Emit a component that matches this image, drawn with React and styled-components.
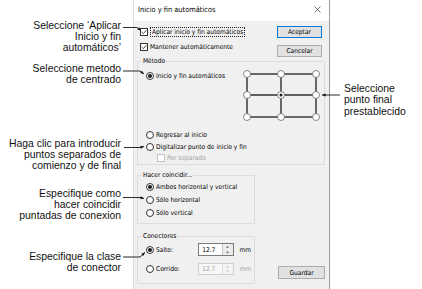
import React from 'react';
import styled, { createGlobalStyle } from 'styled-components';

const GlobalStyle = createGlobalStyle`
  html, body {
    margin: 0;
    padding: 0;
    background: #fff;
  }
  body {
    font-family: "Liberation Sans", Arial, sans-serif;
  }
`;

const Canvas = styled.div`
  position: relative;
  width: 422px;
  height: 289px;
  overflow: hidden;
  background: #fff;
  display: flex;
`;

const Gutter = styled.div`
  flex: none;
  width: ${(p) => p.$w}px;
`;

const Dialog = styled.div`
  flex: none;
  width: 197px;
  height: 300px;
  box-sizing: border-box;
  display: flex;
  flex-direction: column;
  border-left: 1px solid #dcdcdc;
  border-right: 1px solid #9c9c9c;
  font-family: "DejaVu Sans Condensed", "Liberation Sans", Tahoma, sans-serif;
  font-size: 6.6px;
  color: #000;
`;

const TitleBar = styled.div`
  height: 21px;
  flex: none;
  box-sizing: border-box;
  background: #fff;
  display: flex;
  align-items: center;
  justify-content: space-between;
  padding: 0 8px 2px 4px;
  font-size: 7.4px;
`;

const Body = styled.div`
  flex: 1;
  background: #f0f0f0;
  padding: 5px 4px 0 3px;
  display: flex;
  flex-direction: column;
`;

const TopRow = styled.div`
  display: flex;
  justify-content: space-between;
  height: 31px;
`;

const Column = styled.div`
  display: flex;
  flex-direction: column;
  gap: ${(p) => p.$gap}px;
  padding: 0 ${(p) => p.$right || 0}px 0 ${(p) => p.$left || 0}px;
`;

const Row = styled.div`
  display: flex;
  align-items: center;
  gap: 2px;
  height: ${(p) => p.$h || 13}px;
  padding-left: ${(p) => p.$indent || 0}px;
  color: ${(p) => (p.$disabled ? '#a3a3a3' : '#000')};
  white-space: nowrap;
`;

const Box = styled.span`
  flex: none;
  width: 8px;
  height: 8px;
  box-sizing: border-box;
  border: 1px solid ${(p) => (p.$disabled ? '#c4c4c4' : '#333')};
  background: #fff;
  display: flex;
  align-items: center;
  justify-content: center;
`;

const Radio = styled(Box)`
  border-radius: 50%;
`;

const Dot = styled.span`
  width: 4px;
  height: 4px;
  border-radius: 50%;
  background: #1a1a1a;
`;

const Focus = styled.span`
  border: 1px dotted #222;
  padding: 0 1px;
  line-height: 8px;
`;

const DialogButton = styled.div`
  width: ${(p) => p.$w || 45}px;
  height: ${(p) => p.$h || 12}px;
  box-sizing: border-box;
  border: 1px solid ${(p) => (p.$default ? '#0078d7' : '#adadad')};
  background: #e1e1e1;
  display: flex;
  align-items: center;
  justify-content: center;
`;

const Group = styled.fieldset`
  margin: 0;
  padding: 0;
  min-width: 0;
  box-sizing: border-box;
  width: ${(p) => (p.$w ? `${p.$w}px` : 'auto')};
  border: 1px solid #dcdcdc;
`;

const Legend = styled.legend`
  margin-left: 4px;
  padding: 0 1px;
  line-height: 8px;
`;

const GroupBody = styled.div`
  display: flex;
  flex-direction: column;
  gap: ${(p) => p.$gap || 0}px;
  padding: ${(p) => p.$pad};
`;

const MethodTop = styled.div`
  display: flex;
  justify-content: space-between;
  align-items: flex-start;
  margin-bottom: 7px;
`;

const BottomRow = styled.div`
  display: flex;
  justify-content: space-between;
  align-items: flex-end;
  margin-top: 6px;
`;

const FieldLabel = styled.span`
  width: 39px;
`;

const Spin = styled.div`
  width: 38px;
  height: ${(p) => p.$h}px;
  box-sizing: border-box;
  display: flex;
  border: 1px solid ${(p) => (p.$disabled ? '#cfcfcf' : '#7a7a7a')};
  background: ${(p) => (p.$disabled ? '#f7f7f7' : '#fff')};
  color: ${(p) => (p.$disabled ? '#a3a3a3' : '#000')};
  margin-left: 3px;
`;

const SpinValue = styled.span`
  flex: 1;
  padding-left: 3px;
  display: flex;
  align-items: center;
`;

const SpinArrows = styled.div`
  width: 10px;
  display: flex;
  flex-direction: column;
  border-left: 1px solid ${(p) => (p.$disabled ? '#dedede' : '#c8c8c8')};
  background: ${(p) => (p.$disabled ? '#f4f4f4' : '#ececec')};
`;

const Unit = styled.span`
  margin-left: 3px;
  color: ${(p) => (p.$disabled ? '#a3a3a3' : '#000')};
`;

const Note = styled.div`
  position: absolute;
  top: ${(p) => p.$top}px;
  font-family: "Liberation Sans", Arial, sans-serif;
  font-size: 10.4px;
  line-height: 11.3px;
  color: #111;
  white-space: nowrap;
  ${(p) =>
    p.$right
      ? 'left: 344px; text-align: left;'
      : 'right: 301px; text-align: right;'}
`;

const Overlay = styled.svg`
  position: absolute;
  left: 0;
  top: 0;
  pointer-events: none;
`;

const CheckBox = ({ checked, disabled }) => (
  <Box $disabled={disabled}>
    {checked && (
      <svg width="6" height="6" viewBox="0 0 6 6">
        <path d="M0.6 3 L2.3 4.7 L5.4 1.1" fill="none" stroke="#222" strokeWidth="0.8" />
      </svg>
    )}
  </Box>
);

const RadioButton = ({ checked }) => <Radio>{checked && <Dot />}</Radio>;

const Arrow = ({ up, disabled }) => (
  <svg width="9" height="5" viewBox="0 0 9 5" style={{ display: 'block', flex: 1 }}>
    <path
      d={up ? 'M3 3.6 L4.5 1.8 L6 3.6 Z' : 'M3 1.4 L4.5 3.2 L6 1.4 Z'}
      fill={disabled ? '#c4c4c4' : '#606060'}
    />
  </svg>
);

const SpinBox = ({ value, disabled, h }) => (
  <Spin $disabled={disabled} $h={h}>
    <SpinValue>{value}</SpinValue>
    <SpinArrows $disabled={disabled}>
      <Arrow up disabled={disabled} />
      <Arrow disabled={disabled} />
    </SpinArrows>
  </Spin>
);

const gx = [6, 40, 75];
const gy = [5, 26, 48];

const EndPointGrid = () => (
  <svg width="80" height="53" viewBox="0 0 80 53">
    <g stroke="#2e2e2e" strokeWidth="1.4" fill="none">
      <rect x={gx[0]} y={gy[0]} width={gx[2] - gx[0]} height={gy[2] - gy[0]} />
      <line x1={gx[1]} y1={gy[0]} x2={gx[1]} y2={gy[2]} />
      <line x1={gx[0]} y1={gy[1]} x2={gx[2]} y2={gy[1]} />
    </g>
    {gy.map((y) =>
      gx.map((x) => (
        <circle key={`${x}-${y}`} cx={x} cy={y} r="3.5" fill="#fff" stroke="#6a6a6a" strokeWidth="0.8" />
      ))
    )}
    <circle cx={gx[1]} cy={gy[1]} r="1.5" fill="#1a1a1a" />
  </svg>
);

const leaders = [
  [[123, 27.5], [137, 27.5], [141, 30.5]],
  [[123, 71], [140, 71], [144, 74]],
  [[124, 147.5], [140, 147.5], [144, 146.5]],
  [[123, 197.5], [140, 197.5], [144, 198.5]],
  [[123, 257], [140, 257], [145, 252.5]],
  [[340, 95], [322, 95]],
];

const head = (pts) => {
  const [x1, y1] = pts[pts.length - 2];
  const [x2, y2] = pts[pts.length - 1];
  const len = Math.hypot(x2 - x1, y2 - y1);
  const ux = (x2 - x1) / len;
  const uy = (y2 - y1) / len;
  const bx = x2 - ux * 3.6;
  const by = y2 - uy * 3.6;
  return `${x2},${y2} ${bx - uy * 1.5},${by + ux * 1.5} ${bx + uy * 1.5},${by - ux * 1.5}`;
};

export default function App() {
  return (
    <>
      <GlobalStyle />
      <Canvas>
        <Gutter $w={133} />
        <Dialog>
          <TitleBar>
            <span>Inicio y fin automáticos</span>
            <svg width="7" height="7" viewBox="0 0 7 7">
              <path d="M0.5 0.5 L6.5 6.5 M6.5 0.5 L0.5 6.5" stroke="#333" strokeWidth="0.7" />
            </svg>
          </TitleBar>
          <Body>
            <TopRow>
              <Column $gap={3} $left={3}>
                <Row $h={12}>
                  <CheckBox checked />
                  <Focus>Aplicar inicio y fin automáticos</Focus>
                </Row>
                <Row $h={12}>
                  <CheckBox checked />
                  <span>Mantener automáticamente</span>
                </Row>
              </Column>
              <Column $gap={7} $right={3}>
                <DialogButton $default>Aceptar</DialogButton>
                <DialogButton>Cancelar</DialogButton>
              </Column>
            </TopRow>

            <Group>
              <Legend>Método</Legend>
              <GroupBody $pad="4px 3px 1px 8px">
                <MethodTop>
                  <Row>
                    <RadioButton checked />
                    <span>Inicio y fin automáticos</span>
                  </Row>
                  <EndPointGrid />
                </MethodTop>
                <Row $h={12}>
                  <RadioButton />
                  <span>Regresar al inicio</span>
                </Row>
                <Row $h={12}>
                  <RadioButton />
                  <span>Digitalizar punto de inicio y fin</span>
                </Row>
                <Row $h={10} $indent={11} $disabled>
                  <CheckBox disabled />
                  <span>Por separado</span>
                </Row>
              </GroupBody>
            </Group>

            <BottomRow>
              <Column $gap={8}>
                <Group $w={118}>
                  <Legend>Hacer coincidir...</Legend>
                  <GroupBody $pad="1px 3px 4px 8px">
                    <Row>
                      <RadioButton checked />
                      <span>Ambos horizontal y vertical</span>
                    </Row>
                    <Row>
                      <RadioButton />
                      <span>Sólo horizontal</span>
                    </Row>
                    <Row>
                      <RadioButton />
                      <span>Sólo vertical</span>
                    </Row>
                  </GroupBody>
                </Group>
                <Group $w={118}>
                  <Legend>Conectores</Legend>
                  <GroupBody $pad="3px 3px 8px 8px" $gap={6}>
                    <Row>
                      <RadioButton checked />
                      <FieldLabel>Salto:</FieldLabel>
                      <SpinBox value="12.7" h={13} />
                      <Unit>mm</Unit>
                    </Row>
                    <Row>
                      <RadioButton />
                      <FieldLabel>Corrido:</FieldLabel>
                      <SpinBox value="12.7" h={12} disabled />
                      <Unit $disabled>mm</Unit>
                    </Row>
                  </GroupBody>
                </Group>
              </Column>
              <DialogButton $w={47} $h={13} style={{ marginBottom: 5 }}>
                Guardar
              </DialogButton>
            </BottomRow>
          </Body>
        </Dialog>

        <Note $top={19.5}>
          Seleccione ‘Aplicar
          <br />
          Inicio y fin
          <br />
          automáticos’
        </Note>
        <Note $top={62.5}>
          Seleccione metodo
          <br />
          de centrado
        </Note>
        <Note $top={137.5}>
          Haga clic para introducir
          <br />
          puntos separados de
          <br />
          comienzo y de final
        </Note>
        <Note $top={187.5}>
          Especifique como
          <br />
          hacer coincidir
          <br />
          puntadas de conexion
        </Note>
        <Note $top={250.5}>
          Especifique la clase
          <br />
          de conector
        </Note>
        <Note $top={83} $right>
          Seleccione
          <br />
          punto final
          <br />
          prestablecido
        </Note>

        <Overlay width="422" height="289" viewBox="0 0 422 289">
          {leaders.map((pts, i) => (
            <g key={i}>
              <polyline
                points={pts.map((p) => p.join(',')).join(' ')}
                fill="none"
                stroke="#111"
                strokeWidth="0.9"
              />
              <polygon points={head(pts)} fill="#111" />
            </g>
          ))}
        </Overlay>
      </Canvas>
    </>
  );
}
